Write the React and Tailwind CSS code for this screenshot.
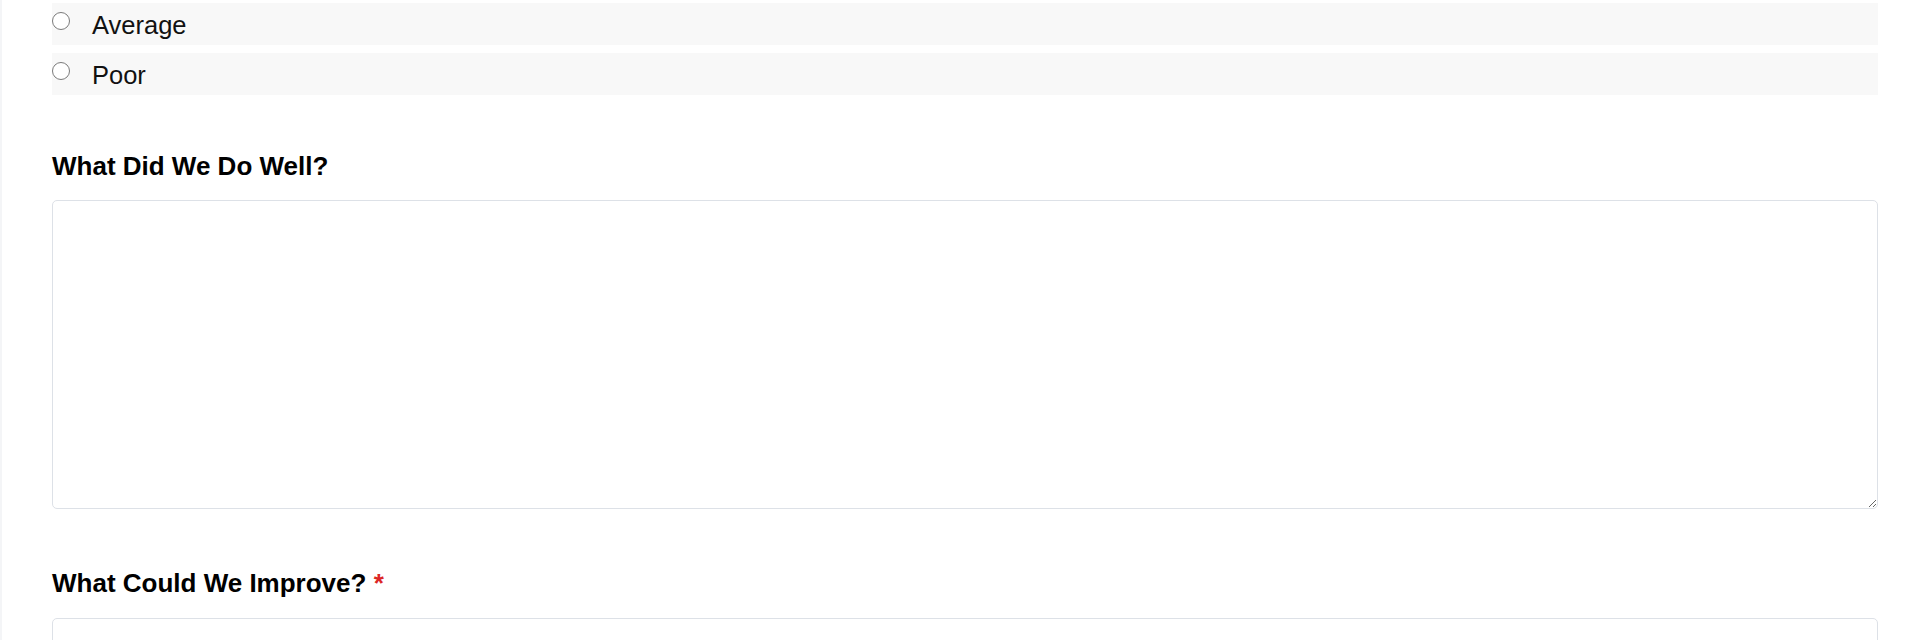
import { useState } from 'react'

const options = ['Average', 'Poor']

export default function App() {
  const [rating, setRating] = useState('')
  const [well, setWell] = useState('')
  const [improve, setImprove] = useState('')

  return (
    <div className="min-h-screen bg-white border-l-2 border-[#f4f5f7] pl-[50px] pr-[42px] pt-[3px] font-['Liberation_Sans',Arial,sans-serif] text-[#111]">
      <div className="flex flex-col gap-2">
        {options.map((opt) => (
          <label key={opt} className="flex items-start h-[42px] bg-[#f8f8f8] pt-2 cursor-pointer">
            <input
              type="radio"
              name="rating"
              value={opt}
              checked={rating === opt}
              onChange={() => setRating(opt)}
              className="appearance-none m-0 mt-px w-[18px] h-[18px] shrink-0 rounded-full border border-[#7a7a7a] bg-white checked:border-[5px] checked:border-[#0a84ff]"
            />
            <span className="ml-[22px] text-[25.5px] leading-[28px]">{opt}</span>
          </label>
        ))}
      </div>

      <h3 className="mt-[55px] text-[26px] leading-[32px] font-bold text-black">What Did We Do Well?</h3>
      <textarea
        value={well}
        onChange={(e) => setWell(e.target.value)}
        className="mt-[18px] block w-full h-[309px] rounded-[5px] border border-[#dde1e7] bg-white p-3 text-[20px] outline-none"
      />

      <h3 className="mt-[58px] text-[26px] leading-[32px] font-bold text-black">
        What Could We Improve? <span className="text-[#dc2626]">*</span>
      </h3>
      <textarea
        value={improve}
        onChange={(e) => setImprove(e.target.value)}
        className="mt-[19px] block w-full h-[309px] rounded-[5px] border border-[#dde1e7] bg-white p-3 text-[20px] outline-none"
      />
    </div>
  )
}
